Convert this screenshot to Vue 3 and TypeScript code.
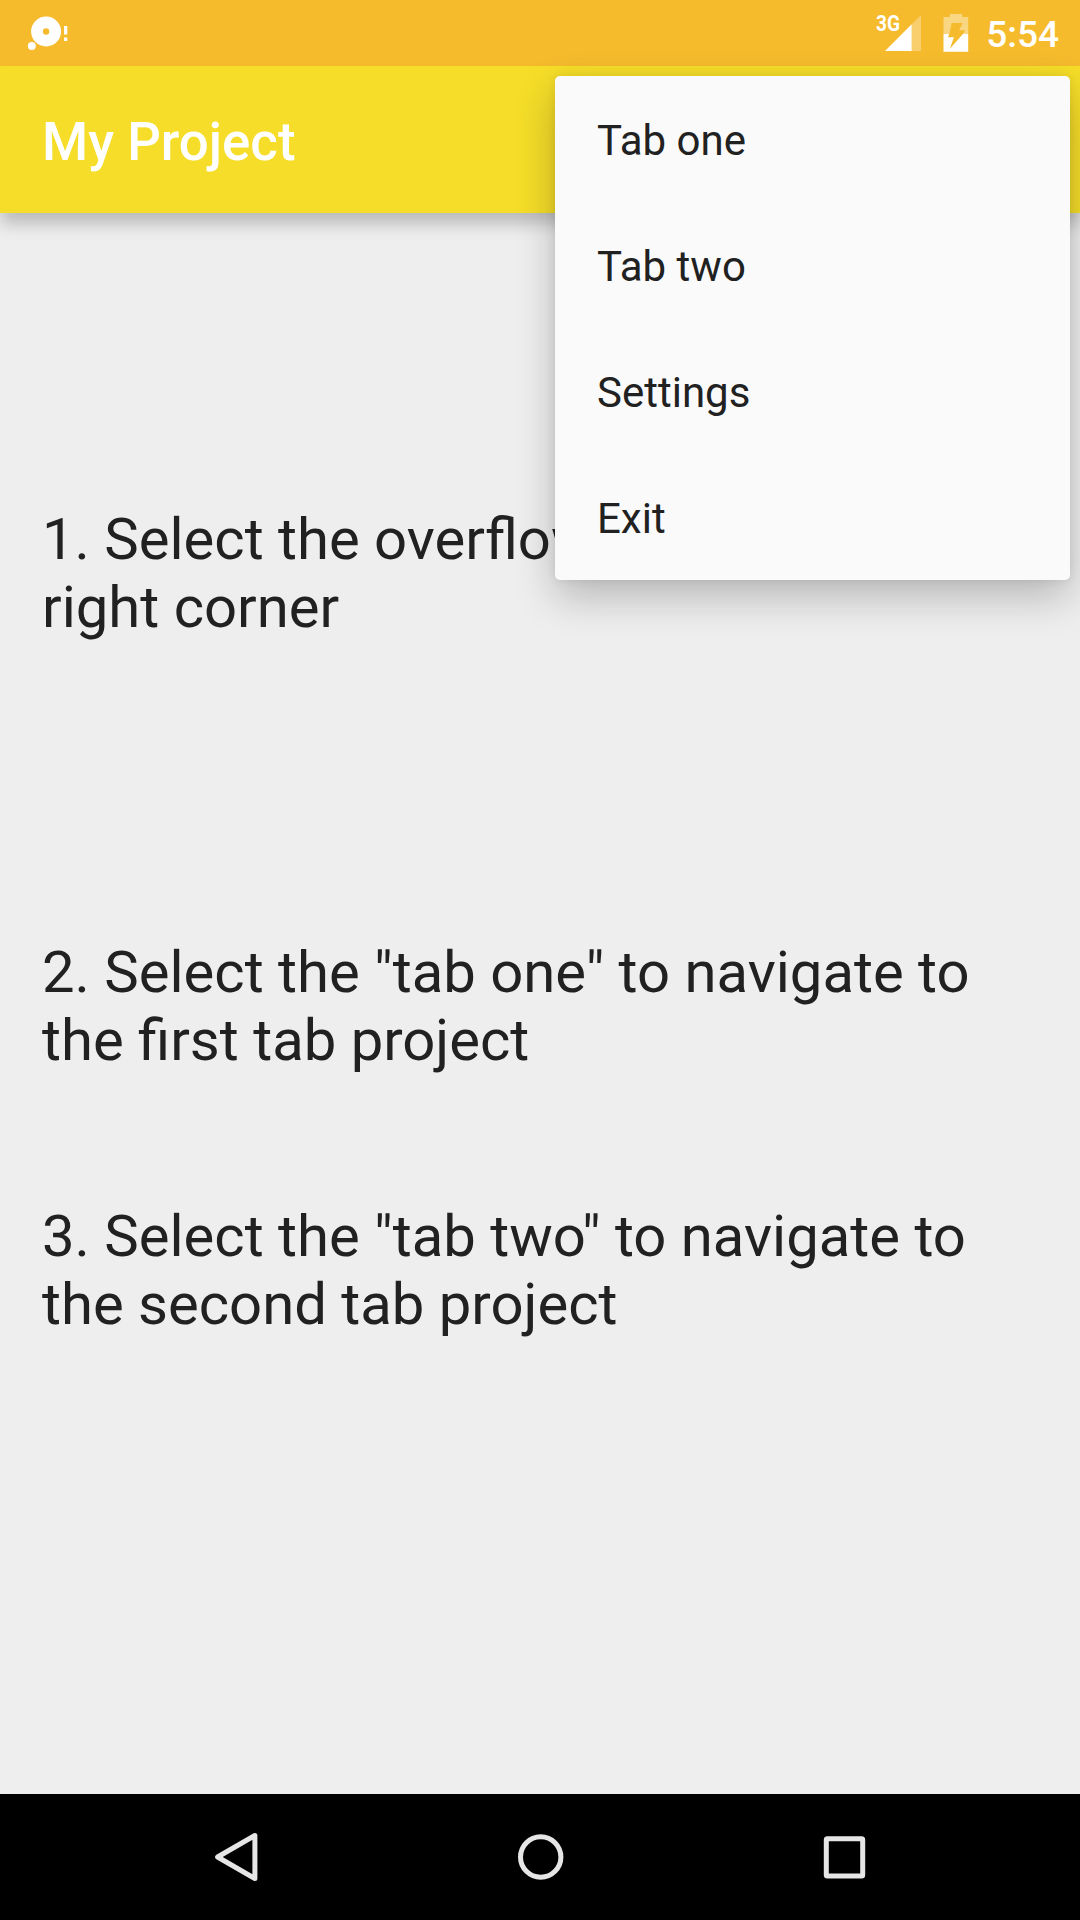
<script setup lang="ts">
const title = 'My Project'
const menuItems: string[] = ['Tab one', 'Tab two', 'Settings', 'Exit']
const steps: string[][] = [
  ['1. Select the overflow', 'right corner'],
  ['2. Select the "tab one" to navigate to', 'the first tab project'],
  ['3. Select the "tab two" to navigate to', 'the second tab project'],
]
</script>

<template>
  <div class="screen">
    <header class="status">
      <svg class="notif" width="48" height="66" viewBox="23.7 0 48 66">
        <path fill="#fff" fill-rule="evenodd" d="M30.8 31.5a15 15 0 1 0 30 0a15 15 0 1 0-30 0zM42.6 31.5a3.2 3.2 0 1 1 6.4 0a3.2 3.2 0 1 1-6.4 0z" />
        <circle cx="31.5" cy="45.9" r="4" fill="#fff" />
        <path fill="#fff" d="M63.7 26h3.3v8.5h-3.3zM63.7 37.6h3.3v3.3h-3.3z" />
      </svg>
      <div class="status-right">
        <svg width="48" height="66" viewBox="875 0 48 66">
          <path fill="#fff" fill-opacity=".3" d="M911.7 24.3L921 15v36h-9.3z" />
          <path fill="#fff" d="M885 51l26.7-26.7V51z" />
          <text x="876.1" y="31.2" class="network" textLength="24" lengthAdjust="spacingAndGlyphs">3G</text>
        </svg>
        <svg class="battery" width="26" height="66" viewBox="942.5 0 26 66">
          <path fill="#fff" fill-opacity=".4" fill-rule="evenodd" d="M943 17h6.3v-3h12.4v3h6v17h-5.3l2.2-3.7h-6l3.6-7.3h-11L948.8 34H943z" />
          <path fill="#fff" d="M943 34h5.8l-1.4 3.3h6l-4 11.4L962.4 34h5.3v17.7H943z" />
        </svg>
        <span class="clock">5:54</span>
      </div>
    </header>

    <div class="appbar"><h1>{{ title }}</h1></div>

    <main class="content">
      <p v-for="(step, i) in steps" :key="i" :class="['step', `step-${i + 1}`]">
        <span v-for="line in step" :key="line">{{ line }}</span>
      </p>
    </main>

    <footer class="nav">
      <svg width="1080" height="126" viewBox="0 1794 1080 126" fill="none" stroke="#e6e6e6" stroke-width="5" stroke-linejoin="round">
        <path d="M254.9 1835.5v43L217.6 1857z" />
        <circle cx="540.7" cy="1857" r="20.2" />
        <rect x="826.3" y="1838.8" width="36.4" height="37.2" rx="1" />
      </svg>
    </footer>

    <div class="menu-layer">
      <ul class="menu">
        <li v-for="item in menuItems" :key="item">{{ item }}</li>
      </ul>
    </div>
  </div>
</template>

<style>
body {
  margin: 0;
}
</style>

<style scoped>
.screen {
  position: relative;
  display: flex;
  flex-direction: column;
  width: 1080px;
  height: 1920px;
  overflow: hidden;
  background: #eee;
  color: #212121;
  font-family: Roboto, "Liberation Sans", sans-serif;
}
.status {
  display: flex;
  justify-content: space-between;
  flex: 0 0 66px;
  height: 66px;
  padding: 0 21px 0 24px;
  background: #f5bb2d;
}
.status svg {
  display: block;
}
.status-right {
  display: flex;
}
.battery {
  margin-left: 19.5px;
}
.network {
  font: 700 22.5px Roboto, sans-serif;
  fill: #fff;
}
.clock {
  margin-left: 17.5px;
  color: #fff;
  font-size: 37px;
  font-weight: 500;
  line-height: 69px;
}
.appbar {
  position: relative;
  z-index: 1;
  display: flex;
  align-items: center;
  flex: 0 0 147px;
  box-sizing: border-box;
  height: 147px;
  padding: 5px 0 0 42px;
  background: #f5dd29;
  box-shadow: 0 12px 15px -1px rgba(0, 0, 0, 0.21);
}
h1 {
  margin: 0;
  color: #fff;
  font-size: 52.8px;
  font-weight: 500;
  line-height: 62px;
}
.content {
  flex: 1;
  padding: 292px 0 0 42px;
}
.step {
  margin: 0;
  font-size: 58px;
  line-height: 68px;
  white-space: nowrap;
}
.step span {
  display: block;
}
.step-2 {
  margin-top: 297px;
}
.step-3 {
  margin-top: 128px;
}
.nav {
  height: 126px;
  background: #000;
}
.nav svg {
  display: block;
}
.menu-layer {
  position: absolute;
  z-index: 2;
  top: 0;
  right: 0;
  padding: 76px 10px 80px 80px;
}
.menu {
  box-sizing: border-box;
  width: 515px;
  height: 504px;
  margin: 0;
  padding: 0;
  border-radius: 5px;
  background: #fafafa;
  box-shadow: 0 17px 40px rgba(0, 0, 0, 0.23), 0 0 10px rgba(0, 0, 0, 0.08);
  list-style: none;
}
.menu li {
  box-sizing: border-box;
  height: 126px;
  padding: 2px 0 0 42px;
  font-size: 42px;
  line-height: 126px;
}
</style>
